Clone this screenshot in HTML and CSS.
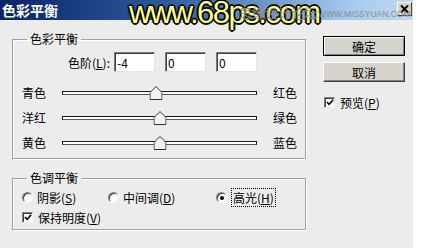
FILE: index.html
```html
<!DOCTYPE html>
<html>
<head>
    <meta name="viewport" content="width=device-width, initial-scale=1">
    <title>色彩平衡</title>
    <link rel="stylesheet" href="styles.css">
</head>

<body>
    <div class="window">
        <div class="titlebar">
            <span class="title">色彩平衡</span>
            <span class="close">
                <svg width="9" height="8" viewBox="0 0 9 8">
                    <path d="M1 0.5 L8 7.5 M8 0.5 L1 7.5" stroke="#000" stroke-width="2" />
                </svg>
            </span>
            <div class="watermark">
                <span class="wm-site">www.68ps.com</span>
                <span class="wm-forum">思缘设计论坛</span>
                <span class="wm-url">WWW.MISSYUAN.COM</span>
            </div>
        </div>

        <div class="client">
            <div class="main">
                <fieldset class="group">
                    <legend>色彩平衡</legend>
                    <div class="levels">
                        <label for="level-1">色阶(<u>L</u>):</label>
                        <input class="field" type="text" id="level-1" value="-4">
                        <input class="field" type="text" value="0">
                        <input class="field" type="text" value="0">
                    </div>
                    <div class="sliders">
                        <div class="slider-row">
                            <span>青色</span>
                            <div class="track"><span class="thumb" style="left: 48%;">
                                <svg width="13" height="14" viewBox="0 0 13 14">
                                    <polygon points="6.5,0.5 12.5,6.5 12.5,13.5 0.5,13.5 0.5,6.5" fill="#f2f2f2" stroke="#333" />
                                </svg>
                            </span></div>
                            <span class="end-label">红色</span>
                        </div>
                        <div class="slider-row">
                            <span>洋红</span>
                            <div class="track"><span class="thumb" style="left: 50%;">
                                <svg width="13" height="14" viewBox="0 0 13 14">
                                    <polygon points="6.5,0.5 12.5,6.5 12.5,13.5 0.5,13.5 0.5,6.5" fill="#f2f2f2" stroke="#333" />
                                </svg>
                            </span></div>
                            <span class="end-label">绿色</span>
                        </div>
                        <div class="slider-row">
                            <span>黄色</span>
                            <div class="track"><span class="thumb" style="left: 50%;">
                                <svg width="13" height="14" viewBox="0 0 13 14">
                                    <polygon points="6.5,0.5 12.5,6.5 12.5,13.5 0.5,13.5 0.5,6.5" fill="#f2f2f2" stroke="#333" />
                                </svg>
                            </span></div>
                            <span class="end-label">蓝色</span>
                        </div>
                    </div>
                </fieldset>

                <fieldset class="group tone">
                    <legend>色调平衡</legend>
                    <div class="tone-row">
                        <span class="option shadows"><span class="radio"></span>阴影(<u>S</u>)</span>
                        <span class="option midtones"><span class="radio"></span>中间调(<u>D</u>)</span>
                        <span class="option"><span class="radio checked"></span><span class="focus">高光(<u>H</u>)</span></span>
                    </div>
                    <div class="tone-row check-row">
                        <span class="checkbox">
                            <svg width="9" height="9" viewBox="0 0 9 9">
                                <path d="M1 4 L3.5 6.5 L8 1.5" fill="none" stroke="#000" stroke-width="1.8" />
                            </svg>
                        </span>
                        保持明度(<u>V</u>)
                    </div>
                </fieldset>
            </div>

            <div class="side">
                <button class="btn default">确定</button>
                <button class="btn">取消</button>
                <div class="preview">
                    <span class="checkbox">
                        <svg width="9" height="9" viewBox="0 0 9 9">
                            <path d="M1 4 L3.5 6.5 L8 1.5" fill="none" stroke="#000" stroke-width="1.8" />
                        </svg>
                    </span>
                    预览(<u>P</u>)
                </div>
            </div>
        </div>
    </div>
</body>

</html>
```

FILE: styles.css
```css
body {
    margin: 0;
    background: #fff;
    font-family: "Noto Sans CJK SC", "Liberation Sans", sans-serif;
    font-size: 12px;
    color: #000;
}

.window {
    width: 413px;
    height: 248px;
    background: #ececec;
    overflow: hidden;
}

/* title bar */

.titlebar {
    position: relative;
    height: 20px;
    padding: 0 1px 0 2px;
    display: flex;
    align-items: center;
    justify-content: space-between;
    background: linear-gradient(to right, #0a246a, #2d5a9c 40%, #a6caf0 85%, #c2d8ee);
}

.title {
    color: #fff;
    font-weight: bold;
    font-size: 14px;
    line-height: 20px;
}

.close {
    width: 15px;
    height: 14px;
    box-sizing: border-box;
    display: flex;
    align-items: center;
    justify-content: center;
    background: #d4d0c8;
    border: 1px solid;
    border-color: #fff #404040 #404040 #fff;
    margin-top: -3px;
}

.watermark {
    position: absolute;
    left: 129px;
    top: 0;
    height: 28px;
    width: 280px;
}

.wm-site {
    position: absolute;
    left: 0;
    top: -3px;
    font-family: "Liberation Sans", sans-serif;
    font-size: 31px;
    line-height: 32px;
    letter-spacing: -1.5px;
    white-space: nowrap;
    color: #ffff88;
    text-shadow: 1px 0 #000, -1px 0 #000, 0 1px #000, 0 -1px #000,
        1px 1px #000, -1px -1px #000, 1px -1px #000, -1px 1px #000,
        2px 0 #222, -2px 0 #222, 0 2px #222, 0 -2px #222;
}

.wm-forum {
    position: absolute;
    left: 110px;
    top: 6px;
    font-size: 13px;
    line-height: 14px;
    white-space: nowrap;
    color: #8a8a8a;
}

.wm-url {
    position: absolute;
    left: 189px;
    top: 10px;
    font-family: "Liberation Sans", sans-serif;
    font-size: 8.5px;
    line-height: 9px;
    white-space: nowrap;
    color: #8c8c8c;
}

/* client area */

.client {
    display: flex;
    padding: 12px 0 0 12px;
}

.main {
    width: 294px;
}

.group {
    margin: 0;
    padding: 6px 0 3px 0;
    width: 294px;
    box-sizing: border-box;
    border: 1px solid #a0a0a0;
    box-shadow: inset 1px 1px 0 #fff, 1px 1px 0 #fff;
}

.group legend {
    margin-left: 14px;
    padding: 0 3px;
    line-height: 14px;
}

.levels {
    display: flex;
    align-items: center;
    height: 20px;
    gap: 10px;
}

.levels label {
    width: 97px;
    text-align: right;
    margin-right: -6px;
}

.field {
    width: 41px;
    height: 20px;
    box-sizing: border-box;
    margin: 0;
    padding: 0 2px;
    font-family: inherit;
    font-size: 12px;
    background: #fff;
    border: 1px solid;
    border-color: #7a7a7a #e4e4e4 #e4e4e4 #7a7a7a;
    box-shadow: inset 1px 1px 0 #404040;
}

.sliders {
    margin-top: 8px;
}

.slider-row {
    display: grid;
    grid-template-columns: 40px 195px 1fr;
    align-items: center;
    height: 25px;
    padding-left: 9px;
}

.end-label {
    padding-left: 16px;
}

.track {
    position: relative;
    height: 4px;
    box-sizing: border-box;
    background: #fff;
    border: 1px solid #1a1a1a;
    border-bottom-color: #5a5a5a;
}

.thumb {
    position: absolute;
    top: -6px;
    width: 13px;
    height: 14px;
    transform: translateX(-50%);
}

.thumb svg {
    display: block;
}

.tone {
    margin-top: 12px;
    padding: 5px 0 5px 0;
}

.tone-row {
    display: flex;
    align-items: center;
    height: 14px;
    padding-left: 9px;
}

.check-row {
    margin-top: 6px;
}

.option {
    display: flex;
    align-items: center;
}

.shadows {
    width: 86px;
}

.midtones {
    width: 108px;
}

.radio {
    width: 11px;
    height: 11px;
    box-sizing: border-box;
    border-radius: 50%;
    background: #fff;
    border: 1px solid;
    border-color: #808080 #f4f4f4 #f4f4f4 #808080;
    box-shadow: inset 1px 1px 0 #404040;
    margin-right: 4px;
    position: relative;
}

.radio.checked::after {
    content: "";
    position: absolute;
    left: 3px;
    top: 3px;
    width: 4px;
    height: 4px;
    border-radius: 50%;
    background: #000;
}

.focus {
    outline: 1px dotted #000;
    padding: 0 1px;
    margin-left: 1px;
}

.checkbox {
    width: 11px;
    height: 11px;
    box-sizing: border-box;
    background: #fff;
    border: 1px solid;
    border-color: #808080 #f4f4f4 #f4f4f4 #808080;
    box-shadow: inset 1px 1px 0 #404040;
    display: inline-flex;
    align-items: center;
    justify-content: center;
    margin-right: 5px;
}

.checkbox svg {
    display: block;
    margin: 1px 0 0 1px;
}

/* buttons */

.side {
    margin-left: 17px;
    padding-top: 4px;
    display: flex;
    flex-direction: column;
}

.btn {
    width: 82px;
    height: 20px;
    margin: 0 0 6px 0;
    padding: 0;
    font-family: inherit;
    font-size: 12px;
    color: #000;
    background: #d6d3cc;
    border: 1px solid;
    border-color: #fff #404040 #404040 #fff;
    box-shadow: inset -1px -1px 0 #808080;
}

.btn.default {
    border-color: #000;
    box-shadow: inset 1px 1px 0 #fff, inset -1px -1px 0 #808080;
}

.preview {
    display: flex;
    align-items: center;
    margin: 8px 0 0 1px;
    height: 12px;
}
```
